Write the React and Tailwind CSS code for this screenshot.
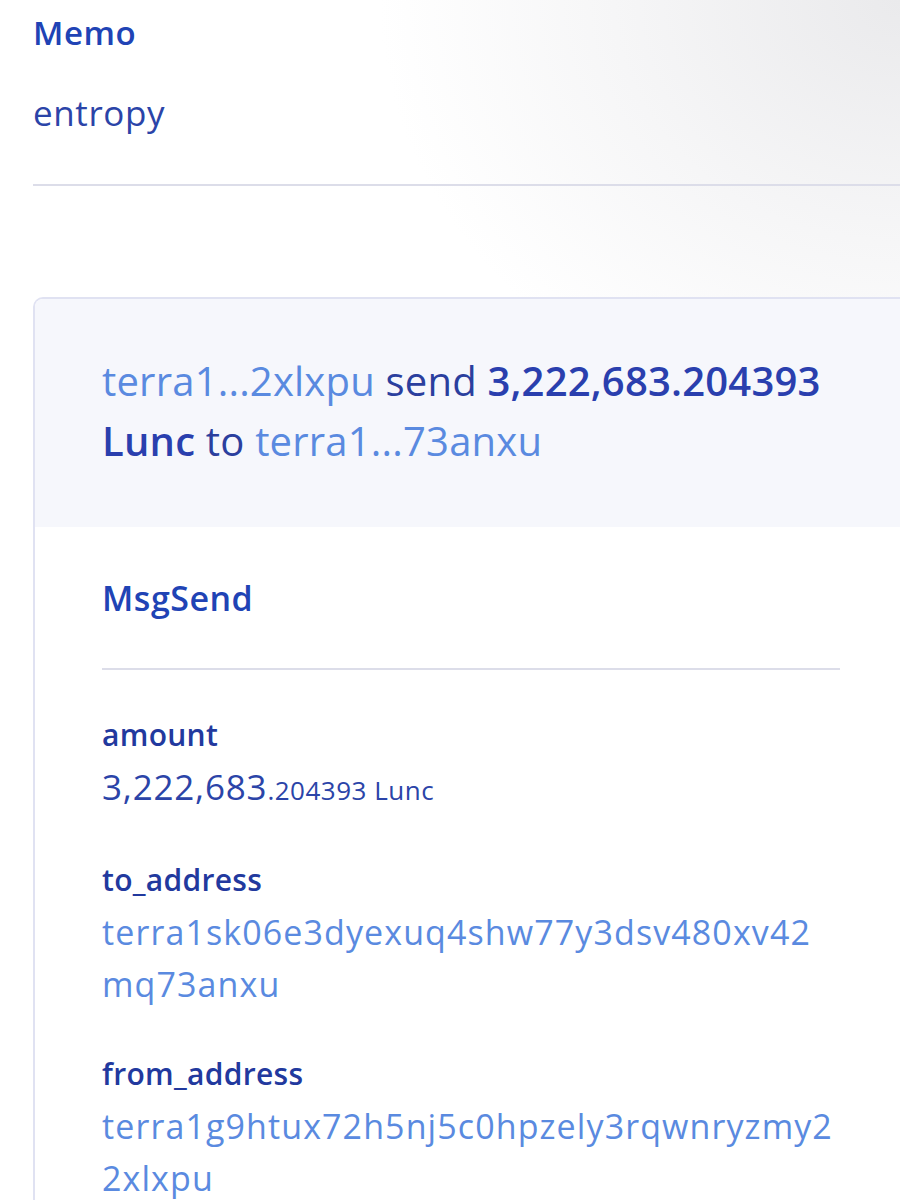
import React from "react";

const tx = {
  memo: "entropy",
  from: "terra1g9htux72h5nj5c0hpzely3rqwnryzmy22xlxpu",
  to: "terra1sk06e3dyexuq4shw77y3dsv480xv42mq73anxu",
  amountInt: "3,222,683",
  amountDec: ".204393",
  denom: "Lunc",
};

const short = (addr) => `${addr.slice(0, 6)}...${addr.slice(-6)}`;

function Field({ label, children }) {
  return (
    <div className="mb-[38px]">
      <div className="text-[30px] leading-[52px] font-semibold text-[#22399e] tracking-[0.3px]">{label}</div>
      <div className="text-[34px] leading-[52px]">{children}</div>
    </div>
  );
}

export default function App() {
  return (
    <div className="w-[900px] h-[1200px] overflow-hidden bg-white bg-[radial-gradient(ellipse_520px_440px_at_100%_0%,#eaeaec,#f6f6f7_55%,#ffffff)] font-['Open_Sans',sans-serif] text-[#2b44a8]">
      <div className="ml-[33px] w-[876px]">
        {/* Memo */}
        <div className="pt-[13px]">
          <h3 className="text-[33px] leading-[40px] font-semibold text-[#2043b5] tracking-[0.5px]">Memo</h3>
          <p className="mt-[36px] text-[35px] leading-[48px] tracking-[0.6px]">{tx.memo}</p>
        </div>
        <div className="mt-[47px] h-[2px] bg-[#dcdde9]" />

        {/* Message card */}
        <div className="mt-[111px] rounded-t-[10px] border-2 border-b-0 border-[#e0e2f2] overflow-hidden">
          <div className="bg-[#f6f7fc] px-[67px] pt-[52px] pb-[56px] text-[40px] leading-[60px] tracking-[0.2px]">
            <span className="text-[#5a8ae0]">{short(tx.from)}</span>{" "}
            <span className="text-[#2b3f9e]">send</span>{" "}
            <b className="font-semibold text-[#2a3fae]">
              {tx.amountInt}
              {tx.amountDec} {tx.denom}
            </b>{" "}
            <span className="text-[#2b3f9e]">to</span>{" "}
            <span className="text-[#5a8ae0]">{short(tx.to)}</span>
          </div>

          <div className="bg-white px-[67px] pt-[51px] h-[700px]">
            <h4 className="text-[34px] leading-[40px] font-semibold text-[#2043b5] tracking-[0.5px]">MsgSend</h4>
            <div className="mt-[50px] h-[2px] bg-[#dcdde9]" />

            <div className="mt-[39px]">
              <Field label="amount">
                <span className="text-[35px] tracking-[0.8px]">{tx.amountInt}</span>
                <span className="text-[26px] tracking-[0.5px]">
                  {tx.amountDec} {tx.denom}
                </span>
              </Field>
              <Field label="to_address">
                <span className="text-[#5a8ae0] break-all tracking-[1.1px]">{tx.to}</span>
              </Field>
              <Field label="from_address">
                <span className="text-[#5a8ae0] break-all tracking-[1.1px]">{tx.from}</span>
              </Field>
            </div>
          </div>
        </div>
      </div>
    </div>
  );
}
